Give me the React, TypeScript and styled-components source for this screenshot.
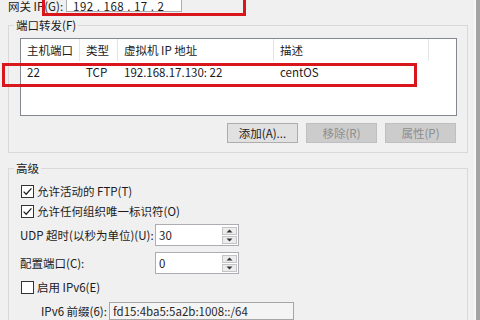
import * as React from "react";
import styled, { createGlobalStyle } from "styled-components";

const GlobalStyle = createGlobalStyle`
  html, body {
    margin: 0;
    padding: 0;
    background: #f0f0f0;
  }
  body {
    font-family: "Noto Sans CJK SC", "Liberation Sans", sans-serif;
    font-size: 11.5px;
    color: #1b1b1b;
  }
`;

const Screen = styled.div`
  position: relative;
  width: 480px;
  height: 320px;
  overflow: hidden;
  display: flex;
  background: #f0f0f0;
`;

const Dialog = styled.div`
  flex: 1;
  display: flex;
  flex-direction: column;
  padding-left: 8px;
  padding-right: 6px;
`;

const EdgeStrip = styled.div`
  width: 4px;
  background: #a4a4a4;
  border-left: 2px solid #f8f8f8;
`;

const GatewayRow = styled.div`
  display: flex;
  align-items: flex-start;
  height: 12px;
`;

const GatewayLabel = styled.span`
  width: 58px;
  line-height: 13px;
  white-space: nowrap;
`;

const IpBox = styled.div`
  box-sizing: border-box;
  width: 116px;
  height: 12px;
  padding-left: 6px;
  line-height: 13px;
  background: #fff;
  border: 1px solid #abadb3;
  border-top: none;
  letter-spacing: 0.5px;
`;

const Group = styled.fieldset<{ $gap: number }>`
  margin: ${(p) => p.$gap}px 0 0 0;
  padding: 5px 10px 9px 11px;
  border: 1px solid #d9d9d9;
  min-width: 0;
`;

const Caption = styled.legend`
  margin-left: -6px;
  padding: 0 2px;
  line-height: 16px;
  height: 16px;
`;

const ListView = styled.div`
  box-sizing: border-box;
  height: 78px;
  background: #fff;
  border: 1px solid #828790;
`;

const Columns = styled.div<{ $height: number }>`
  display: grid;
  grid-template-columns: 59px 38px 156px 155px;
  height: ${(p) => p.$height}px;
  align-items: center;
`;

const HeadCell = styled.div`
  height: 100%;
  display: flex;
  align-items: center;
  padding-left: 6px;
  border-right: 1px solid #e5e5e5;
  line-height: 14px;
`;

const Cell = styled.div`
  padding-left: 6px;
  line-height: 14px;
  white-space: nowrap;
`;

const ButtonRow = styled.div`
  display: flex;
  justify-content: flex-end;
  gap: 8px;
  margin-top: 7px;
  margin-right: 1px;
`;

const PushButton = styled.div<{ $disabled?: boolean }>`
  box-sizing: border-box;
  width: 71px;
  height: 20px;
  display: flex;
  align-items: center;
  justify-content: center;
  line-height: 14px;
  background: ${(p) => (p.$disabled ? "#cccccc" : "#e1e1e1")};
  border: 1px solid ${(p) => (p.$disabled ? "#bfbfbf" : "#adadad")};
  color: ${(p) => (p.$disabled ? "#8c8c8c" : "#1b1b1b")};
`;

const CheckRow = styled.div<{ $top?: number }>`
  display: flex;
  align-items: center;
  gap: 3px;
  height: 20px;
  margin-top: ${(p) => p.$top ?? 0}px;
  padding-left: 1px;
  line-height: 14px;
`;

const FieldRow = styled.div<{ $top: number; $indent?: number; $labelWidth: number }>`
  display: grid;
  grid-template-columns: ${(p) => p.$labelWidth}px auto;
  align-items: center;
  margin-top: ${(p) => p.$top}px;
  padding-left: ${(p) => p.$indent ?? 0}px;
  line-height: 14px;
  white-space: nowrap;
`;

const SpinBox = styled.div`
  box-sizing: border-box;
  width: 84px;
  height: 22px;
  display: flex;
  align-items: flex-start;
  justify-content: space-between;
  padding: 3px 1px 0 3px;
  background: #fff;
  border: 1px solid #abadb3;
  line-height: 14px;
`;

const SpinButtons = styled.div`
  display: flex;
  flex-direction: column;
  gap: 1px;
  margin-top: -1px;
`;

const SpinButton = styled.div`
  box-sizing: border-box;
  width: 15px;
  height: 8px;
  display: flex;
  align-items: center;
  justify-content: center;
  background: #ececec;
  border: 1px solid #c4c4c4;
`;

const PrefixBox = styled.div`
  box-sizing: border-box;
  width: 185px;
  height: 18px;
  padding: 0 0 0 3px;
  display: flex;
  align-items: center;
  line-height: 14px;
  background: #f4f4f4;
  border: 1px solid #a6a6a6;
  color: #2a2a2a;
`;

const Annotation = styled.div<{ $x: number; $y: number; $w: number; $h: number }>`
  position: absolute;
  left: ${(p) => p.$x}px;
  top: ${(p) => p.$y}px;
  width: ${(p) => p.$w}px;
  height: ${(p) => p.$h}px;
  box-sizing: border-box;
  border: 3px solid #d9161c;
  pointer-events: none;
`;

const CheckBox = ({ checked }: { checked?: boolean }) => (
  <svg width="13" height="13" viewBox="0 0 13 13">
    <rect x="0.5" y="0.5" width="12" height="12" fill="#fff" stroke="#333" />
    {checked && (
      <path d="M2.6 6.6 L5.2 9.2 L10.4 3.4" fill="none" stroke="#222" strokeWidth="1.3" />
    )}
  </svg>
);

const Arrow = ({ up }: { up?: boolean }) => (
  <svg width="7" height="4" viewBox="0 0 7 4">
    <path d={up ? "M0.5 3.5 L3.5 0.5 L6.5 3.5 Z" : "M0.5 0.5 L3.5 3.5 L6.5 0.5 Z"} fill="#333" />
  </svg>
);

const Spinner = ({ value }: { value: string }) => (
  <SpinBox>
    <span>{value}</span>
    <SpinButtons>
      <SpinButton>
        <Arrow up />
      </SpinButton>
      <SpinButton>
        <Arrow />
      </SpinButton>
    </SpinButtons>
  </SpinBox>
);

const rules = [{ host: "22", type: "TCP", guest: "192.168.17.130: 22", desc: "centOS" }];

export default function App() {
  return (
    <>
      <GlobalStyle />
      <Screen>
        <Dialog>
          <GatewayRow>
            <GatewayLabel>网关 IP(G):</GatewayLabel>
            <IpBox>192 . 168 . 17 . 2</IpBox>
          </GatewayRow>

          <Group $gap={5}>
            <Caption>端口转发(F)</Caption>
            <ListView>
              <Columns $height={22}>
                <HeadCell>主机端口</HeadCell>
                <HeadCell>类型</HeadCell>
                <HeadCell>虚拟机 IP 地址</HeadCell>
                <HeadCell>描述</HeadCell>
              </Columns>
              {rules.map((r) => (
                <Columns $height={21} key={r.host}>
                  <Cell>{r.host}</Cell>
                  <Cell>{r.type}</Cell>
                  <Cell>{r.guest}</Cell>
                  <Cell>{r.desc}</Cell>
                </Columns>
              ))}
            </ListView>
            <ButtonRow>
              <PushButton>添加(A)...</PushButton>
              <PushButton $disabled>移除(R)</PushButton>
              <PushButton $disabled>属性(P)</PushButton>
            </ButtonRow>
          </Group>

          <Group $gap={7}>
            <Caption>高级</Caption>
            <CheckRow>
              <CheckBox checked />
              允许活动的 FTP(T)
            </CheckRow>
            <CheckRow>
              <CheckBox checked />
              允许任何组织唯一标识符(O)
            </CheckRow>
            <FieldRow $top={3} $labelWidth={135}>
              <span>UDP 超时(以秒为单位)(U):</span>
              <Spinner value="30" />
            </FieldRow>
            <FieldRow $top={6} $labelWidth={135}>
              <span>配置端口(C):</span>
              <Spinner value="0" />
            </FieldRow>
            <CheckRow $top={3}>
              <CheckBox />
              启用 IPv6(E)
            </CheckRow>
            <FieldRow $top={5} $indent={21} $labelWidth={68}>
              <span>IPv6 前缀(6):</span>
              <PrefixBox>fd15:4ba5:5a2b:1008::/64</PrefixBox>
            </FieldRow>
          </Group>
        </Dialog>
        <EdgeStrip />
        <Annotation $x={42} $y={-5} $w={204} $h={21} />
        <Annotation $x={2} $y={63} $w={415} $h={24} />
      </Screen>
    </>
  );
}
